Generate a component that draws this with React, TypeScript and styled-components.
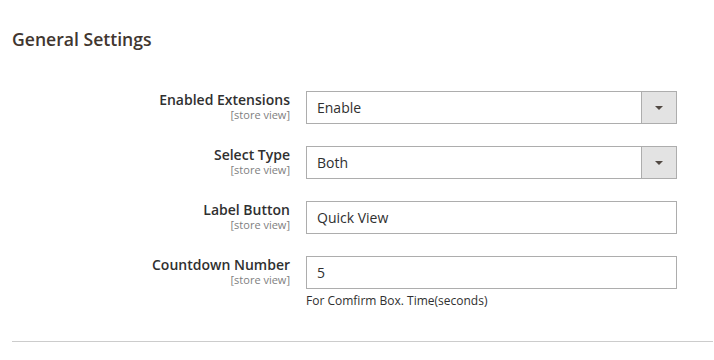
import styled, { createGlobalStyle } from "styled-components";

const GlobalStyle = createGlobalStyle`
  body {
    margin: 0;
    background: #ffffff;
    font-family: "Open Sans", "Liberation Sans", sans-serif;
    color: #303030;
  }
`;

const Page = styled.div`
  padding: 29px 1px 0 12px;
`;

const Title = styled.h2`
  margin: 0;
  font-size: 17.6px;
  line-height: 20px;
  font-weight: 600;
  color: #41362f;
`;

const Fieldset = styled.div`
  display: flex;
  flex-direction: column;
  gap: 22px;
  padding-top: 42px;
  padding-bottom: 32px;
  border-bottom: 1px solid #cccccc;
`;

const Row = styled.div`
  display: grid;
  grid-template-columns: 278px 371px;
  column-gap: 16px;
`;

const LabelCol = styled.div`
  display: flex;
  flex-direction: column;
  align-items: flex-end;
  text-align: right;
`;

const Label = styled.span`
  font-size: 14px;
  line-height: 17px;
  font-weight: 600;
  color: #303030;
`;

const Scope = styled.span`
  font-size: 11px;
  line-height: 13px;
  color: #808080;
`;

const Control = styled.div`
  display: flex;
  flex-direction: column;
`;

const Box = styled.div`
  box-sizing: border-box;
  height: 33px;
  border: 1px solid #adadad;
  background: #ffffff;
  display: flex;
  align-items: stretch;
`;

const Value = styled.input`
  flex: 1;
  min-width: 0;
  border: none;
  outline: none;
  background: transparent;
  padding: 0 10px;
  font-family: "Open Sans", "Liberation Sans", sans-serif;
  font-size: 14px;
  color: #303030;
`;

const SelectText = styled.span`
  flex: 1;
  display: flex;
  align-items: center;
  padding: 0 10px;
  font-size: 14px;
  color: #303030;
`;

const Toggle = styled.span`
  width: 34px;
  background: #e3e3e3;
  border-left: 1px solid #adadad;
  display: flex;
  align-items: center;
  justify-content: center;
  &::after {
    content: "";
    border-left: 4px solid transparent;
    border-right: 4px solid transparent;
    border-top: 4px solid #514943;
  }
`;

const Note = styled.p`
  margin: 4px 0 0;
  font-size: 12px;
  line-height: 16px;
  color: #303030;
`;

interface IField {
  label: string;
  value: string;
  select?: boolean;
  note?: string;
}

const fields: IField[] = [
  { label: "Enabled Extensions", value: "Enable", select: true },
  { label: "Select Type", value: "Both", select: true },
  { label: "Label Button", value: "Quick View" },
  {
    label: "Countdown Number",
    value: "5",
    note: "For Comfirm Box. Time(seconds)",
  },
];

function App() {
  return (
    <>
      <GlobalStyle />
      <Page>
        <Title>General Settings</Title>
        <Fieldset>
          {fields.map((field) => (
            <Row key={field.label}>
              <LabelCol>
                <Label>{field.label}</Label>
                <Scope>[store view]</Scope>
              </LabelCol>
              <Control>
                <Box>
                  {field.select ? (
                    <>
                      <SelectText>{field.value}</SelectText>
                      <Toggle />
                    </>
                  ) : (
                    <Value type="text" defaultValue={field.value} />
                  )}
                </Box>
                {field.note && <Note>{field.note}</Note>}
              </Control>
            </Row>
          ))}
        </Fieldset>
      </Page>
    </>
  );
}

export default App;
